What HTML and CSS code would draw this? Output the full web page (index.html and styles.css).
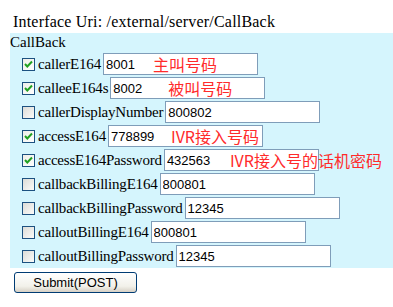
FILE: index.html
```html
<!DOCTYPE html>
<html lang="en">
<head>
    <meta charset="UTF-8">
    <meta name="viewport" content="width=device-width, initial-scale=1.0">
    <title>CallBack</title>
    <link rel="stylesheet" href="styles.css">
</head>
<body>
    <div class="uri">Interface Uri: /external/server/CallBack</div>

    <form class="panel">
        <div class="legend">CallBack</div>

        <div class="row">
            <span class="box checked"><svg width="13" height="13" viewBox="0 0 13 13"><polyline points="3,6 5.3,8.5 10,3.5" /></svg></span>
            <span class="name">callerE164</span>
            <span class="field"><input type="text" value="8001"><span class="note note-caller">主叫号码</span></span>
        </div>
        <div class="row">
            <span class="box checked"><svg width="13" height="13" viewBox="0 0 13 13"><polyline points="3,6 5.3,8.5 10,3.5" /></svg></span>
            <span class="name">calleeE164s</span>
            <span class="field"><input type="text" value="8002"><span class="note note-callee">被叫号码</span></span>
        </div>
        <div class="row">
            <span class="box"></span>
            <span class="name">callerDisplayNumber</span>
            <span class="field"><input type="text" value="800802"></span>
        </div>
        <div class="row">
            <span class="box checked"><svg width="13" height="13" viewBox="0 0 13 13"><polyline points="3,6 5.3,8.5 10,3.5" /></svg></span>
            <span class="name">accessE164</span>
            <span class="field"><input type="text" value="778899"><span class="note note-access">IVR接入号码</span></span>
        </div>
        <div class="row">
            <span class="box checked"><svg width="13" height="13" viewBox="0 0 13 13"><polyline points="3,6 5.3,8.5 10,3.5" /></svg></span>
            <span class="name">accessE164Password</span>
            <span class="field"><input type="text" value="432563"><span class="note note-password">IVR接入号的话机密码</span></span>
        </div>
        <div class="row">
            <span class="box"></span>
            <span class="name">callbackBillingE164</span>
            <span class="field"><input type="text" value="800801"></span>
        </div>
        <div class="row">
            <span class="box"></span>
            <span class="name">callbackBillingPassword</span>
            <span class="field"><input type="text" value="12345"></span>
        </div>
        <div class="row">
            <span class="box"></span>
            <span class="name">calloutBillingE164</span>
            <span class="field"><input type="text" value="800801"></span>
        </div>
        <div class="row">
            <span class="box"></span>
            <span class="name">calloutBillingPassword</span>
            <span class="field"><input type="text" value="12345"></span>
        </div>
    </form>

    <button class="submit" type="button">Submit(POST)</button>
</body>
</html>
```

FILE: styles.css
```css
body {
    margin: 0;
    padding: 10px 0 0 10px;
    font-family: "Liberation Serif", "Times New Roman", serif;
    font-size: 15px;
    color: #000;
    background: #fff;
}

.uri {
    height: 23px;
    line-height: 23px;
    padding-left: 3px;
    font-size: 16px;
    letter-spacing: 0.2px;
    white-space: nowrap;
}

.panel {
    margin: 0;
    background: #d5f5fd;
}

.legend {
    height: 19px;
    line-height: 19px;
}

.row {
    display: flex;
    align-items: center;
    height: 24px;
    padding-left: 12px;
    white-space: nowrap;
}

.box {
    width: 13px;
    height: 13px;
    box-sizing: border-box;
    border: 1px solid #1c5180;
    background: linear-gradient(135deg, #dcdcd7, #fbfbf9);
    margin-right: 3px;
    flex: none;
}

.box.checked {
    background: linear-gradient(135deg, #eeeee8, #ffffff);
}

.box svg {
    display: block;
    margin: -1px;
}

.box polyline {
    fill: none;
    stroke: #21a121;
    stroke-width: 2;
}

.name {
    margin-right: 2px;
    letter-spacing: -0.2px;
}

.field {
    position: relative;
    display: flex;
}

.field input {
    width: 155px;
    height: 22px;
    box-sizing: border-box;
    margin: 0;
    padding: 0 2px;
    border: 1px solid #7f9db9;
    font-family: Arial, "Liberation Sans", sans-serif;
    font-size: 13px;
    color: #000;
    background: #fff;
}

.note {
    position: absolute;
    top: 3px;
    font-family: "Noto Sans CJK SC", sans-serif;
    font-size: 16px;
    line-height: 17px;
    color: #ff2b2b;
    white-space: nowrap;
}

.note-caller { left: 50px; }
.note-callee { left: 58px; }
.note-access { left: 63px; }
.note-password { left: 66px; }

.submit {
    display: block;
    margin: 4px 0 0 4px;
    width: 123px;
    height: 21px;
    padding: 0;
    border: 1px solid #003c74;
    border-radius: 3px;
    background: linear-gradient(#ffffff, #f2f1ea 70%, #d6d0c5);
    font-family: Arial, "Liberation Sans", sans-serif;
    font-size: 13px;
    color: #000;
}
```
